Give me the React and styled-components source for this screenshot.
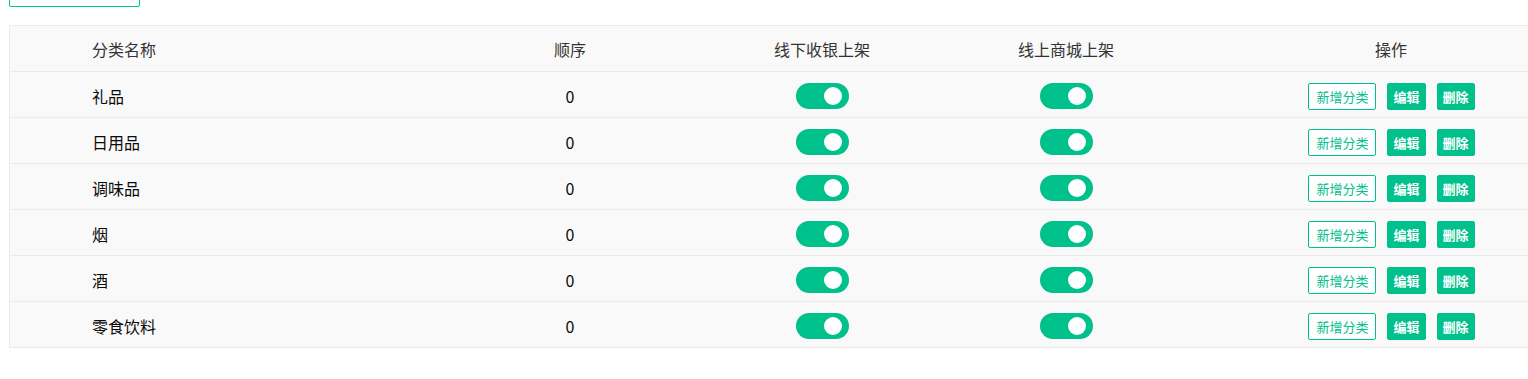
import React, { useState } from "react";
import styled, { createGlobalStyle } from "styled-components";

const GREEN = "#00c08b";

const GlobalStyles = createGlobalStyle`
  body {
    margin: 0;
    background: #fff;
    overflow: hidden;
    font-family: "Noto Sans CJK SC", "Noto Sans", sans-serif;
  }
`;

const categories = [
  { id: 1, name: "礼品", sort: 0, offline: true, online: true },
  { id: 2, name: "日用品", sort: 0, offline: true, online: true },
  { id: 3, name: "调味品", sort: 0, offline: true, online: true },
  { id: 4, name: "烟", sort: 0, offline: true, online: true },
  { id: 5, name: "酒", sort: 0, offline: true, online: true },
  { id: 6, name: "零食饮料", sort: 0, offline: true, online: true },
];

const Toggle = ({ on, onClick }) => (
  <Track on={on ? 1 : 0} onClick={onClick}>
    <Knob on={on ? 1 : 0} />
  </Track>
);

const App = () => {
  const [rows, setRows] = useState(categories);

  const flip = (id, key) =>
    setRows(rows.map((r) => (r.id === id ? { ...r, [key]: !r[key] } : r)));

  return (
    <Page>
      <GlobalStyles />
      <TopBox />
      <Table>
        <HeadRow>
          <NameCell>分类名称</NameCell>
          <Cell>顺序</Cell>
          <Cell>线下收银上架</Cell>
          <Cell>线上商城上架</Cell>
          <Cell>操作</Cell>
        </HeadRow>
        {rows.map((row) => (
          <Row key={row.id}>
            <NameCell body={1}>{row.name}</NameCell>
            <Cell body={1}>{row.sort}</Cell>
            <Cell body={1}>
              <Toggle on={row.offline} onClick={() => flip(row.id, "offline")} />
            </Cell>
            <Cell body={1}>
              <Toggle on={row.online} onClick={() => flip(row.id, "online")} />
            </Cell>
            <Cell body={1}>
              <Actions>
                <OutlineBtn>新增分类</OutlineBtn>
                <SolidBtn>编辑</SolidBtn>
                <SolidBtn>删除</SolidBtn>
              </Actions>
            </Cell>
          </Row>
        ))}
      </Table>
    </Page>
  );
};

const Page = styled.div`
  padding-left: 9px;
  margin-top: -23px;
`;

const TopBox = styled.div`
  width: 129px;
  height: 28px;
  border: 1px solid ${GREEN};
  border-radius: 2px;
  margin-bottom: 18px;
`;

const Table = styled.div`
  width: 1585px;
  border-left: 1px solid #ebebeb;
  border-top: 1px solid #ebebeb;
  background: #f9f9f9;
`;

const HeadRow = styled.div`
  display: grid;
  grid-template-columns: 430px 260px 244px 244px 406px;
  height: 45px;
  border-bottom: 1px solid #ebebeb;
`;

const Row = styled(HeadRow)``;

const Cell = styled.div`
  display: flex;
  align-items: center;
  justify-content: center;
  padding-top: ${(p) => (p.body ? "3px" : "0")};
  font-size: 16px;
  color: ${(p) => (p.body ? "#0a0a0a" : "#333")};
`;

const NameCell = styled(Cell)`
  justify-content: flex-start;
  padding-left: 82px;
`;

const Track = styled.div`
  position: relative;
  width: 53px;
  height: 26px;
  border-radius: 13px;
  background: ${(p) => (p.on ? GREEN : "#ccc")};
  cursor: pointer;
`;

const Knob = styled.span`
  position: absolute;
  top: 4px;
  left: ${(p) => (p.on ? "28px" : "7px")};
  width: 18px;
  height: 18px;
  border-radius: 50%;
  background: #fff;
`;

const Actions = styled.div`
  display: flex;
  gap: 11px;
  margin-left: 1px;
`;

const OutlineBtn = styled.button`
  height: 27px;
  padding: 0 7px;
  border: 1px solid ${GREEN};
  border-radius: 2px;
  background: #fff;
  color: ${GREEN};
  font-family: inherit;
  font-size: 13px;
  cursor: pointer;
`;

const SolidBtn = styled(OutlineBtn)`
  background: ${GREEN};
  color: #fff;
  font-weight: bold;
  padding: 0 5px;
`;

export default App;
